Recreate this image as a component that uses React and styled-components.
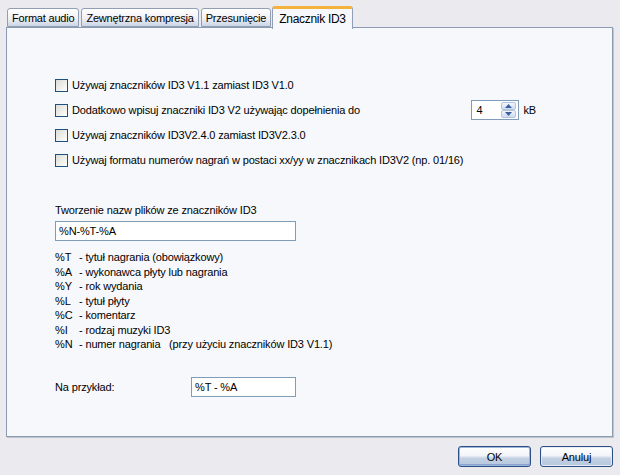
import React from 'react';
import styled, { createGlobalStyle } from 'styled-components';

const GlobalStyle = createGlobalStyle`
  html, body {
    margin: 0;
    padding: 0;
    background: #ebeaef;
  }
  body {
    font-family: Tahoma, "Liberation Sans", Arial, sans-serif;
    font-size: 11px;
    letter-spacing: -0.15px;
    color: #000;
  }
`;

const Window = styled.div`
  width: 620px;
  height: 475px;
  box-sizing: border-box;
  padding: 6px 6px 0 6px;
  display: flex;
  flex-direction: column;
`;

const TabBar = styled.div`
  height: 21px;
  display: flex;
  align-items: flex-end;
  gap: 2px;
  padding-left: 1px;
  position: relative;
  z-index: 1;
`;

const Tab = styled.div`
  box-sizing: border-box;
  height: ${p => (p.active ? '23px' : '19px')};
  margin-bottom: ${p => (p.active ? '-2px' : '0')};
  margin-left: ${p => (p.active ? '-1px' : '0')};
  padding: ${p => (p.active ? '3px 6px 0 6px' : '2px 4px 0 4px')};
  border: 1px solid #919eb4;
  border-bottom: ${p => (p.active ? 'none' : '1px solid #919eb4')};
  border-top: ${p => (p.active ? '3px solid #f3b23d' : '1px solid #919eb4')};
  border-radius: 3px 3px 0 0;
  background: ${p =>
    p.active
      ? '#f7f8fc'
      : 'linear-gradient(to bottom, #ffffff 0%, #f1f1f5 55%, #c9d5e6 100%)'};
  white-space: nowrap;
  font-size: ${p => (p.active ? '12px' : '11px')};
  letter-spacing: ${p => (p.active ? '-0.3px' : '-0.2px')};
  line-height: 14px;
`;

const Panel = styled.div`
  box-sizing: border-box;
  height: 410px;
  width: 607px;
  border: 1px solid #8b9bb4;
  background: #f7f8fc;
  box-shadow: 1px 1px 0 #c1c4cc;
  padding: 51px 0 0 48px;
  display: flex;
  flex-direction: column;
`;

const CheckRow = styled.div`
  height: 25px;
  display: flex;
  align-items: flex-start;
`;

const Box = styled.span`
  box-sizing: border-box;
  width: 13px;
  height: 13px;
  border: 1px solid #1c5180;
  background: linear-gradient(135deg, #dcdcd7 0%, #f0f0ec 60%, #ffffff 100%);
  margin-right: 4px;
  flex: none;
`;

const CheckText = styled.span`
  line-height: 13px;
  white-space: nowrap;
`;

const Spacer = styled.span`
  flex: 1;
`;

const SpinWrap = styled.div`
  display: flex;
  align-items: center;
  margin-top: -4px;
  margin-right: 76px;
`;

const SpinInput = styled.div`
  box-sizing: border-box;
  width: 48px;
  height: 20px;
  border: 1px solid #7f9db9;
  background: #fff;
  display: flex;
  align-items: center;
  padding: 0 2px 0 4px;
`;

const SpinValue = styled.span`
  flex: 1;
`;

const SpinButtons = styled.div`
  width: 15px;
  height: 16px;
  display: flex;
  flex-direction: column;
`;

const SpinHalf = styled.div`
  flex: 1;
  box-sizing: border-box;
  border: 1px solid #b4c4dd;
  border-radius: 2px;
  background: linear-gradient(to bottom, #f4f7fc, #cfdaee);
  display: flex;
  align-items: center;
  justify-content: center;
`;

const Unit = styled.span`
  margin-left: 4px;
`;

const FieldLabel = styled.div`
  margin-top: 25px;
  line-height: 13px;
`;

const TextBox = styled.div`
  box-sizing: border-box;
  width: ${p => p.w}px;
  height: 20px;
  border: 1px solid #7f9db9;
  background: #fff;
  padding: 3px 3px 0;
  line-height: 13px;
`;

const NameBox = styled(TextBox)`
  margin-top: 4px;
`;

const Legend = styled.div`
  margin-top: 10px;
  display: grid;
  grid-template-columns: 24px auto;
  grid-auto-rows: 14.5px;
  line-height: 13px;
  white-space: pre;
`;

const ExampleRow = styled.div`
  margin-top: 24px;
  display: flex;
  align-items: center;
`;

const ExampleLabel = styled.span`
  width: 136px;
`;

const Footer = styled.div`
  display: flex;
  justify-content: flex-end;
  gap: 9px;
  padding: 9px 1px 0 0;
`;

const Button = styled.button`
  box-sizing: border-box;
  width: 73px;
  height: 21px;
  border: 1px solid #2d4f86;
  border-radius: 3px;
  font-family: inherit;
  font-size: 11px;
  letter-spacing: inherit;
  color: #000;
  padding: 0;
  background: linear-gradient(to bottom, #ffffff 0%, #f3f4f9 45%, #c2d0e3 60%, #b6c7de 100%);
  box-shadow: ${p => (p.primary ? 'inset 0 0 0 1px #9fb6dc, inset 0 -1px 0 1px #8aa4d0' : 'inset 0 0 0 1px #e8edf5')};
`;

const checks = [
  'Używaj znaczników ID3 V1.1 zamiast ID3 V1.0',
  'Dodatkowo wpisuj znaczniki ID3 V2 używając dopełnienia do',
  'Używaj znaczników ID3V2.4.0 zamiast ID3V2.3.0',
  'Używaj formatu numerów nagrań w postaci xx/yy w znacznikach ID3V2 (np. 01/16)',
];

const legend = [
  ['%T', '- tytuł nagrania (obowiązkowy)'],
  ['%A', '- wykonawca płyty lub nagrania'],
  ['%Y', '- rok wydania'],
  ['%L', '- tytuł płyty'],
  ['%C', '- komentarz'],
  ['%I', '- rodzaj muzyki ID3'],
  ['%N', '- numer nagrania   (przy użyciu znaczników ID3 V1.1)'],
];

const tabs = ['Format audio', 'Zewnętrzna kompresja', 'Przesunięcie', 'Znacznik ID3'];

function Arrow({ up }) {
  return (
    <svg width="7" height="4" viewBox="0 0 7 4">
      <path d={up ? 'M0 4 L3.5 0 L7 4 Z' : 'M0 0 L3.5 4 L7 0 Z'} fill="#3a5fa0" />
    </svg>
  );
}

export default function App() {
  return (
    <>
      <GlobalStyle />
      <Window>
        <TabBar>
          {tabs.map((t, i) => (
            <Tab key={t} active={i === 3}>
              {t}
            </Tab>
          ))}
        </TabBar>
        <Panel>
          {checks.map((c, i) => (
            <CheckRow key={i}>
              <Box />
              <CheckText>{c}</CheckText>
              {i === 1 && (
                <>
                  <Spacer />
                  <SpinWrap>
                    <SpinInput>
                      <SpinValue>4</SpinValue>
                      <SpinButtons>
                        <SpinHalf><Arrow up /></SpinHalf>
                        <SpinHalf><Arrow /></SpinHalf>
                      </SpinButtons>
                    </SpinInput>
                    <Unit>kB</Unit>
                  </SpinWrap>
                </>
              )}
            </CheckRow>
          ))}
          <FieldLabel>Tworzenie nazw plików ze znaczników ID3</FieldLabel>
          <NameBox w={241}>%N-%T-%A</NameBox>
          <Legend>
            {legend.map(([k, v]) => (
              <React.Fragment key={k}>
                <span>{k}</span>
                <span>{v}</span>
              </React.Fragment>
            ))}
          </Legend>
          <ExampleRow>
            <ExampleLabel>Na przykład:</ExampleLabel>
            <TextBox w={105}>%T - %A</TextBox>
          </ExampleRow>
        </Panel>
        <Footer>
          <Button primary>OK</Button>
          <Button>Anuluj</Button>
        </Footer>
      </Window>
    </>
  );
}
